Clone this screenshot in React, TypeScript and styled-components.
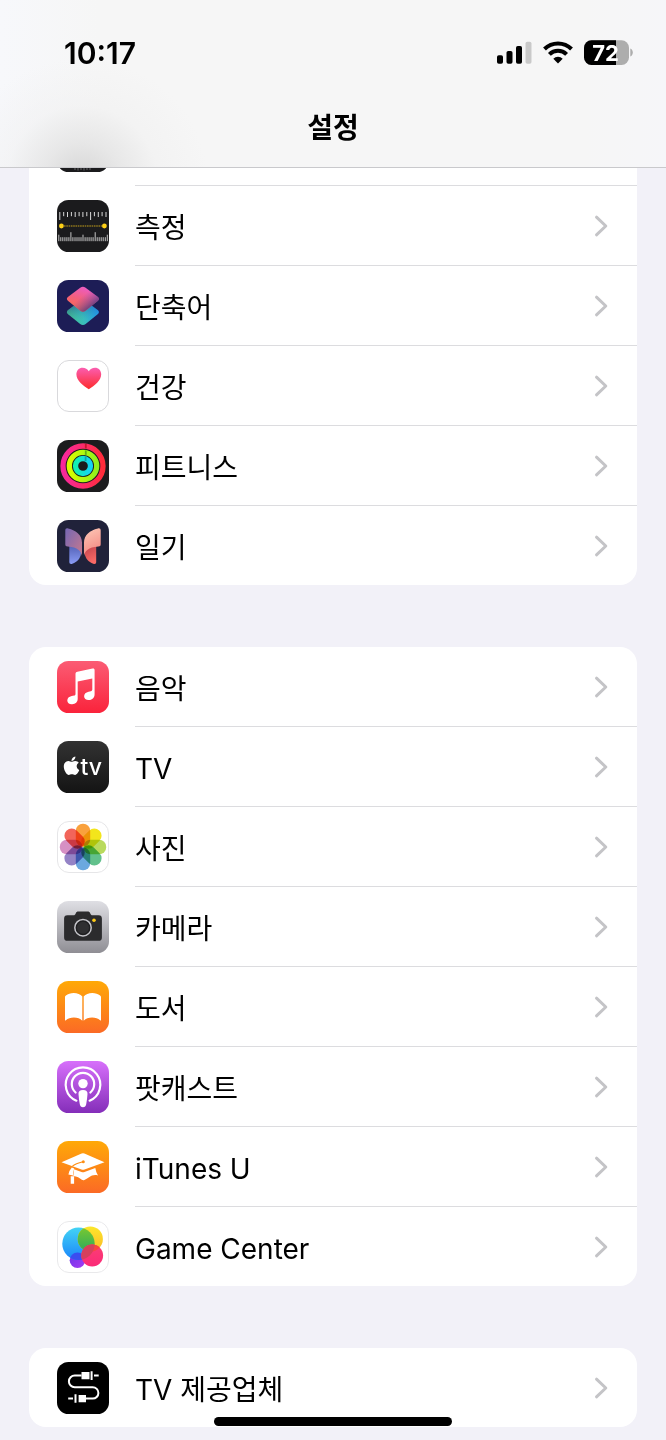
import React from 'react';
import styled, { createGlobalStyle } from 'styled-components';
import { FaApple } from 'react-icons/fa';

const GlobalStyle = createGlobalStyle`
  *, *::before, *::after { box-sizing: border-box; }
  body {
    margin: 0;
    background: #f2f1f8;
    color: #000;
    font-family: Inter, "Noto Sans CJK KR", sans-serif;
  }
`;

const Page = styled.div`
  display: flex;
  flex-direction: column;
  min-height: 100vh;
`;

const Header = styled.header`
  display: flex;
  flex-direction: column;
  height: 168px;
  border-bottom: 1px solid #c9c9cc;
  background:
    radial-gradient(ellipse 125px 120px at 82px 178px, rgba(214, 214, 214, 1) 0%, rgba(226, 226, 226, 0.75) 30%, rgba(238, 238, 238, 0.4) 60%, rgba(246, 246, 246, 0) 100%),
    linear-gradient(90deg, #f7f8fb 0, #f6f6f6 100px, #f6f6f6 88%, #f6f6f9 100%);
`;

const StatusBar = styled.div`
  display: flex;
  align-items: center;
  justify-content: space-between;
  height: 106px;
  padding: 0 33px 0 64px;
`;

const Clock = styled.time`
  font-size: 30px;
  font-weight: 600;
  line-height: 36px;
`;

const StatusIcons = styled.div`
  display: flex;
  align-items: center;
  gap: 11px;
`;

const Title = styled.h1`
  margin: 0;
  font-size: 28px;
  font-weight: 600;
  line-height: 44px;
  text-align: center;
`;

const List = styled.main`
  display: flex;
  flex-direction: column;
  gap: 62px;
  padding: 0 29px 13px;
`;

const Group = styled.ul<{ $continued?: boolean }>`
  margin: 0;
  padding: 0;
  list-style: none;
  overflow: hidden;
  background: #fff;
  border-radius: ${(p) => (p.$continued ? '0 0 17px 17px' : '17px')};
`;

const Item = styled.li`
  display: flex;
`;

const RowLink = styled.a`
  display: flex;
  flex: 1;
  align-items: flex-start;
  gap: 26px;
  padding-left: 28px;
  color: inherit;
  text-decoration: none;
`;

const IconBox = styled.span`
  flex: none;
  width: 52px;
  height: 52px;
  margin-top: 14px;
`;

const RowBody = styled.span`
  display: flex;
  flex: 1;
  align-items: center;
  justify-content: space-between;
  height: 80px;
  padding-right: 29px;
  border-bottom: 1px solid #dcdcdf;

  ${Item}:last-child & {
    height: 79px;
    border-bottom: 0;
  }
`;

const Label = styled.span`
  padding-top: 4px;
  font-size: 28px;
  line-height: 40px;
`;

/* The row that is scrolled away under the header. */
const PartialRow = styled.li`
  display: flex;
  align-items: flex-end;
  gap: 26px;
  height: 18px;
  padding-left: 28px;
  overflow: hidden;
`;

const PartialIcon = styled.span`
  width: 52px;
  height: 52px;
  margin-bottom: 14px;
`;

const PartialLine = styled.span`
  flex: 1;
  border-bottom: 1px solid #dcdcdf;
`;

const HomeIndicator = styled.div`
  position: fixed;
  bottom: 14px;
  left: 50%;
  width: 238px;
  height: 9px;
  margin-left: -119px;
  border-radius: 5px;
  background: #000;
`;

function Tile({ fill, outline, children }: { fill: string; outline?: string; children: React.ReactNode }) {
  return (
    <svg width="52" height="52" viewBox="0 0 52 52" display="block" aria-hidden="true">
      <rect x={outline ? 0.5 : 0} y={outline ? 0.5 : 0} width={outline ? 51 : 52} height={outline ? 51 : 52} rx="11.5" fill={fill} stroke={outline ?? 'none'} />
      {children}
    </svg>
  );
}

function Fade({ id, from, to, x2 = 0, y2 = 1 }: { id: string; from: string; to: string; x2?: number; y2?: number }) {
  return (
    <linearGradient id={id} x1="0" y1="0" x2={x2} y2={y2}>
      <stop offset="0" stopColor={from} />
      <stop offset="1" stopColor={to} />
    </linearGradient>
  );
}

const CompassIcon = () => (
  <Tile fill="#1b1b1d">
    <path d="M18 48v2M21 48v2.500M24 48v2M27 48v2.500M30 48v2M33 48v2" stroke="#77777a" strokeWidth="0.800" />
  </Tile>
);

const upperTicks = Array.from({ length: 13 }, (_, i) => `M${(2.8 + i * 3.85).toFixed(1)} 12v${i === 0 || i === 8 ? 8 : i % 2 ? 4.2 : 5}`).join('');
const lowerTicks = Array.from({ length: 25 }, (_, i) => `M${(1.8 + i * 2.02).toFixed(1)} 41.200v${i === 6 || i === 18 ? -9 : i % 6 === 0 ? -6.5 : -4}`).join('');

const MeasureIcon = () => (
  <Tile fill="#1b1b1d">
    <path d={upperTicks} stroke="#d8d8d8" strokeWidth="1" />
    <path d={lowerTicks} stroke="#d8d8d8" strokeWidth="0.900" />
    <path d="M7 26h38" stroke="#c4a01c" strokeWidth="1.200" strokeDasharray="1.600 0.700" />
    <circle cx="4.400" cy="26" r="2.400" fill="#fdd017" />
    <circle cx="47.400" cy="26" r="2.400" fill="#fdd017" />
  </Tile>
);

const diamond = 'q2.700-1.700 5.400 0l12 9q2.600 2.100 0 4.300l-12 9.800q-2.700 2-5.400 0l-12-9.800q-2.600-2.200 0-4.300z';

const ShortcutsIcon = () => (
  <Tile fill="#1d1d56">
    <defs>
      <linearGradient id="sc-low" x1="0" y1="0.700" x2="1" y2="0.350">
        <stop offset="0" stopColor="#45c08f" />
        <stop offset="0.450" stopColor="#35b6c4" />
        <stop offset="1" stopColor="#147bff" />
      </linearGradient>
      <linearGradient id="sc-shade" x1="0.200" y1="0.200" x2="0.450" y2="0.850">
        <stop offset="0" stopColor="#25407a" stopOpacity="0.850" />
        <stop offset="1" stopColor="#4be0a0" stopOpacity="0.300" />
      </linearGradient>
      <linearGradient id="sc-top" x1="0.250" y1="0.850" x2="0.600" y2="0.050">
        <stop offset="0" stopColor="#fb6a55" />
        <stop offset="0.450" stopColor="#f4607c" />
        <stop offset="1" stopColor="#ec5cc0" />
      </linearGradient>
      <linearGradient id="sc-dim" x1="0.550" y1="0.300" x2="0.950" y2="0.700">
        <stop offset="0" stopColor="#7f4fa8" stopOpacity="0" />
        <stop offset="1" stopColor="#43347e" stopOpacity="0.900" />
      </linearGradient>
    </defs>
    <path d={`M23.200 20.900${diamond}`} fill="url(#sc-low)" />
    <path d={`M23.200 20.900${diamond}`} fill="url(#sc-shade)" opacity="0.600" />
    <path d={`M23.200 7.700${diamond}`} fill="url(#sc-top)" />
    <path d={`M23.200 7.700${diamond}`} fill="url(#sc-dim)" />
  </Tile>
);

const HealthIcon = () => (
  <Tile fill="#fff" outline="#d9d9dc">
    <defs><Fade id="heart" from="#fb5db0" to="#fd2b2b" /></defs>
    <path d="M31.800 29.200C26 25.500 19.400 20.500 19.400 14.300c0-4 2.700-6.600 6.200-6.600 2.700 0 4.900 1.300 6.200 3.600 1.300-2.300 3.500-3.600 6.200-3.600 3.500 0 6.200 2.600 6.200 6.600 0 6.200-6.600 11.200-12.400 14.900z" fill="url(#heart)" />
  </Tile>
);

const FitnessIcon = () => (
  <Tile fill="#1c1c1e">
    <defs>
      <Fade id="ring-a" from="#f8289c" to="#ff2d3a" x2={1} y2={0} />
      <Fade id="ring-b" from="#d8ff00" to="#8ff21c" x2={1} y2={0} />
      <Fade id="ring-c" from="#12f0b0" to="#14d3f5" x2={1} y2={0} />
    </defs>
    <g fill="none" strokeWidth="5.300">
      <circle cx="26" cy="26" r="20" stroke="url(#ring-a)" />
      <circle cx="26" cy="26" r="13.700" stroke="url(#ring-b)" />
      <circle cx="26" cy="26" r="7.500" stroke="url(#ring-c)" />
    </g>
    <g fill="none" strokeWidth="1.800">
      <path d="M28.800 4v4.500" stroke="#c5182c" />
      <path d="M28.800 10.400v4.500" stroke="#62b516" />
      <path d="M28.600 16.700v4.300" stroke="#0fa3a8" />
    </g>
  </Tile>
);

const JournalIcon = () => (
  <Tile fill="#20223a">
    <defs>
      <Fade id="jr-lu" from="#7567b4" to="#c6798d" x2={1} y2={1} />
      <Fade id="jr-ru" from="#fdc9b8" to="#f58b84" x2={0.3} y2={1} />
      <Fade id="jr-ll" from="#5563b8" to="#8a9cf5" x2={0} y2={1} />
      <Fade id="jr-rl" from="#c2434d" to="#fa6a66" x2={0.3} y2={1} />
    </defs>
    <path d="M12.300 26H22c1.600 2 2.200 4.800 2 7.500-.4 4.500-3.700 8.600-8.700 10.300-1.900.600-3-.200-3-2z" fill="url(#jr-ll)" />
    <path d="M39.200 26H30c-1.600 2-2.400 4.800-2.200 7.500.4 4.500 3.500 8.600 8.500 10.300 1.900.600 2.900-.2 2.900-2z" fill="url(#jr-rl)" />
    <path d="M8.300 10.400c0-1.800 1-2.500 2.800-2 8 2 13.900 6.500 13.900 14.200v13.200c-.8-4.500-4.300-8.700-14.300-9.300-1.700-.1-2.400-.8-2.400-2.300z" fill="url(#jr-lu)" />
    <path d="M43.700 10.400c0-1.800-1-2.500-2.800-2-8 2-13.900 6.500-13.900 14.200v13.200c.8-4.500 4.300-8.700 14.300-9.300 1.700-.1 2.400-.8 2.400-2.300z" fill="url(#jr-ru)" />
  </Tile>
);

const MusicIcon = () => (
  <Tile fill="url(#music)">
    <defs><Fade id="music" from="#fb5c74" to="#fa233b" /></defs>
    <path d="M37.600 9v24.200c0 3.300-2.200 5.600-5.600 5.900-2.900.200-4.900-1.400-4.900-3.800 0-2.300 1.700-3.900 4.500-4.500l2.200-.5c1-.2 1.500-.8 1.500-1.700V17.400l-14.600 3.100v17.300c0 3.200-2.200 5.300-5.500 5.500-2.900.200-4.900-1.300-4.900-3.700 0-2.300 1.600-3.900 4.400-4.500l2.500-.5c.9-.2 1.300-.7 1.300-1.600V13c0-1.300.6-2 1.900-2.300l15.100-3.200c1.400-.3 2.100.2 2.100 1.500z" fill="#fff" />
  </Tile>
);

const TvIcon = () => (
  <Tile fill="url(#tv)">
    <defs><Fade id="tv" from="#323232" to="#141414" /></defs>
    <FaApple x="4" y="14.200" size="21" color="#fff" />
    <text x="23.500" y="34" fill="#fff" fontFamily="Inter, sans-serif" fontSize="23" fontWeight="500">tv</text>
  </Tile>
);

const petals = ['#f9a13d', '#f3e51c', '#b9da5d', '#62c18c', '#6ba8df', '#9483c6', '#d690c4', '#f2655a'];

const PhotosIcon = () => (
  <Tile fill="#fff" outline="#e6e6e8">
    <g style={{ isolation: 'isolate' }}>
      {petals.map((color, i) => (
        <rect key={color} x="18.800" y="2.800" width="14.400" height="22.600" rx="7" fill={color} transform={`rotate(${i * 45} 26 26)`} style={{ mixBlendMode: 'multiply' }} />
      ))}
    </g>
  </Tile>
);

const CameraIcon = () => (
  <Tile fill="url(#camera)">
    <defs><Fade id="camera" from="#dfdfe4" to="#8f8e94" /></defs>
    <path d="M10.500 14.200h6c1.200 0 1.800-.6 2.200-1.800.5-1.400 1.300-2 2.800-2h9c1.500 0 2.300.600 2.800 2 .4 1.200 1 1.800 2.200 1.800h6c2.400 0 3.400 1.100 3.400 3.400v18.800c0 2.300-1 3.400-3.400 3.400h-31c-2.400 0-3.400-1.100-3.400-3.400V17.600c0-2.300 1-3.400 3.400-3.400z" fill="#2b2b2d" />
    <circle cx="26" cy="26.700" r="8.200" fill="#1f1f21" stroke="#c5c5ca" strokeWidth="1.500" />
    <circle cx="26" cy="26.700" r="6" fill="#2f2f31" />
    <circle cx="37" cy="19.300" r="1.800" fill="#fcc917" />
  </Tile>
);

const BooksIcon = () => (
  <Tile fill="url(#books)">
    <defs><Fade id="books" from="#ffa907" to="#fb6a25" /></defs>
    <path d="M25.300 15.500v24.300c-2-2-5-3.200-8.400-3.200-3.300 0-6 .9-8 2.700-.5.400-.9.200-.9-.4V16.300c0-.9.200-1.400.9-1.900 2-1.500 4.700-2.400 7.800-2.400 3.600 0 6.700 1.200 8.600 3.500zM26.700 15.500v24.300c2-2 5-3.200 8.400-3.200 3.300 0 6 .9 8 2.700.5.400.9.200.9-.4V16.300c0-.9-.2-1.400-.9-1.900-2-1.500-4.700-2.400-7.800-2.400-3.600 0-6.700 1.200-8.600 3.500z" fill="#fff" />
  </Tile>
);

const PodcastsIcon = () => (
  <Tile fill="url(#podcasts)">
    <defs><Fade id="podcasts" from="#d770fb" to="#842eb9" /></defs>
    <g fill="none" stroke="#fff" strokeWidth="2.200" strokeLinecap="round">
      <path d="M19.400 39.700a17.300 17.300 0 1 1 13.200 0" />
      <path d="M18.600 31.500a11.200 11.200 0 1 1 14.800 0" />
    </g>
    <circle cx="26" cy="22.600" r="4.700" fill="#fff" />
    <path d="M26 29c3.100 0 4.700 1.300 4.500 3.900-.2 3.600-.7 7.100-1.300 10.300-.4 2-1.400 3-3.200 3s-2.800-1-3.200-3c-.6-3.200-1.100-6.700-1.300-10.300-.2-2.600 1.400-3.900 4.500-3.900z" fill="#fff" />
  </Tile>
);

const ITunesUIcon = () => (
  <Tile fill="url(#itunesu)">
    <defs><Fade id="itunesu" from="#ffa907" to="#fb6a25" /></defs>
    <path d="M4.500 21.300 24.600 12.500q1.400-.5 2.800 0l20.100 8.800-20 7.200q-1.500.5-3 0z" fill="#fff" />
    <path d="M17 28.300l7.500 2.600q1.500.5 3 0l10.800-3.900q.6 4 2.700 7.500c-3.600-1-6.500 0-8.600 1.600q-2.200 1.500-5 3-1.400.5-2.600-.3c-2.300-2.200-4.700-3.600-8.500-3.900z" fill="#fff" />
    <path d="M26 20.800q-7.500 1.800-10.800 4.600" fill="none" stroke="#fd8e14" strokeWidth="1.100" />
    <circle cx="26.300" cy="20.800" r="1.500" fill="#fd8e14" />
    <path d="M14.800 26.400q-2.800 3-3.400 7.200l4.600 1q.2-4.500 1.200-7.200zM13.700 35.200h3.400v7.500h-3.400z" fill="#fff" />
  </Tile>
);

const GameCenterIcon = () => (
  <Tile fill="#fff" outline="#e9e9eb">
    <defs>
      <Fade id="gc-blue" from="#43d3f4" to="#1a85fb" />
      <Fade id="gc-yellow" from="#fbe72b" to="#fcb928" />
      <Fade id="gc-pink" from="#fb3f74" to="#fb2a78" />
      <Fade id="gc-purple" from="#6a35e8" to="#a73cf3" x2={1} />
      <Fade id="gc-green" from="#7cc92e" to="#2cab5c" x2={0} />
      <clipPath id="gc-clip"><circle cx="21.500" cy="22.800" r="16.200" /></clipPath>
      <clipPath id="gc-clip2"><circle cx="33.300" cy="18" r="12.600" /></clipPath>
    </defs>
    <circle cx="20.500" cy="39.300" r="7.800" fill="url(#gc-purple)" />
    <circle cx="21.500" cy="22.800" r="16.200" fill="url(#gc-blue)" />
    <g clipPath="url(#gc-clip)"><circle cx="20.500" cy="39.300" r="7.800" fill="#3a4df0" /></g>
    <circle cx="33.300" cy="18" r="12.600" fill="url(#gc-yellow)" />
    <g clipPath="url(#gc-clip)"><circle cx="33.300" cy="18" r="12.600" fill="url(#gc-green)" /></g>
    <circle cx="35.200" cy="34.500" r="10.900" fill="url(#gc-pink)" />
    <g clipPath="url(#gc-clip2)"><circle cx="35.200" cy="34.500" r="10.900" fill="#f9443f" /></g>
    <g clipPath="url(#gc-clip)"><circle cx="35.200" cy="34.500" r="10.900" fill="#d5405c" /></g>
  </Tile>
);

const TvProviderIcon = () => (
  <Tile fill="#000">
    <path d="M24.500 13.600h-6.800a5.800 5.800 0 0 0 0 11.600h18a5.700 5.700 0 0 1 0 11.400h-7" fill="none" stroke="#fff" strokeWidth="2" />
    <path d="M24.500 10h8v7.200h-8zM33.600 9.300h2v8.600h-2zM37 12.600h4.700v2H37zM21.600 33h7.400v7.200h-7.400zM17.500 32.200h2v8.600h-2zM11.200 35.600H16v2h-4.800z" fill="#fff" />
  </Tile>
);

const Signal = () => (
  <svg width="35" height="24" viewBox="0 0 35 24" role="img" aria-label="Signal">
    <rect x="0" y="14.200" width="6" height="8.500" rx="1.800" />
    <rect x="9.500" y="10" width="6" height="12.700" rx="1.800" />
    <rect x="19" y="5" width="6" height="17.700" rx="1.800" />
    <rect x="28.500" y="0.700" width="6" height="22" rx="1.800" fill="#c9c9c9" />
  </svg>
);

const Wifi = () => (
  <svg width="30" height="24" viewBox="0 0 30 24" role="img" aria-label="Wi-Fi">
    <g fill="none" stroke="#000" strokeWidth="4">
      <path d="M1.500 8a19.200 19.200 0 0 1 27 0" />
      <path d="M6.400 13.300a12.200 12.200 0 0 1 17.200 0" />
    </g>
    <path d="M15 22.500l-4.700-4.700a6.700 6.700 0 0 1 9.400 0z" />
  </svg>
);

const Battery = () => (
  <svg width="49" height="26" viewBox="0 0 49 26" role="img" aria-label="Battery 72%">
    <clipPath id="battery"><rect x="0" y="0.200" width="45" height="24.800" rx="7.500" /></clipPath>
    <g clipPath="url(#battery)">
      <rect width="45" height="26" fill="#adadad" />
      <rect width="32" height="26" fill="#000" />
    </g>
    <path d="M46.300 8.600v8c1.500-.5 2.500-2.100 2.500-4s-1-3.500-2.500-4z" fill="#adadad" />
    <text x="21.500" y="20.600" fill="#fff" fontFamily="Inter, sans-serif" fontSize="22" fontWeight="700" textAnchor="middle">72</text>
  </svg>
);

const Chevron = () => (
  <svg width="14" height="22" viewBox="0 0 14 22" aria-hidden="true">
    <path d="M2.500 2.200 11.800 11l-9.300 8.800" fill="none" stroke="#c4c4c7" strokeWidth="3" strokeLinecap="round" strokeLinejoin="round" />
  </svg>
);

type Entry = { label: string; Icon: () => React.JSX.Element };

const tools: Entry[] = [
  { label: '측정', Icon: MeasureIcon },
  { label: '단축어', Icon: ShortcutsIcon },
  { label: '건강', Icon: HealthIcon },
  { label: '피트니스', Icon: FitnessIcon },
  { label: '일기', Icon: JournalIcon },
];

const media: Entry[] = [
  { label: '음악', Icon: MusicIcon },
  { label: 'TV', Icon: TvIcon },
  { label: '사진', Icon: PhotosIcon },
  { label: '카메라', Icon: CameraIcon },
  { label: '도서', Icon: BooksIcon },
  { label: '팟캐스트', Icon: PodcastsIcon },
  { label: 'iTunes U', Icon: ITunesUIcon },
  { label: 'Game Center', Icon: GameCenterIcon },
];

const provider: Entry[] = [{ label: 'TV 제공업체', Icon: TvProviderIcon }];

function Rows({ entries }: { entries: Entry[] }) {
  return entries.map(({ label, Icon }) => (
    <Item key={label}>
      <RowLink href="#">
        <IconBox><Icon /></IconBox>
        <RowBody>
          <Label>{label}</Label>
          <Chevron />
        </RowBody>
      </RowLink>
    </Item>
  ));
}

export default function App() {
  return (
    <Page lang="ko">
      <GlobalStyle />
      <Header>
        <StatusBar>
          <Clock>10:17</Clock>
          <StatusIcons>
            <Signal />
            <Wifi />
            <Battery />
          </StatusIcons>
        </StatusBar>
        <Title>설정</Title>
      </Header>
      <List>
        <Group $continued>
          <PartialRow>
            <PartialIcon><CompassIcon /></PartialIcon>
            <PartialLine />
          </PartialRow>
          <Rows entries={tools} />
        </Group>
        <Group><Rows entries={media} /></Group>
        <Group><Rows entries={provider} /></Group>
      </List>
      <HomeIndicator />
    </Page>
  );
}
